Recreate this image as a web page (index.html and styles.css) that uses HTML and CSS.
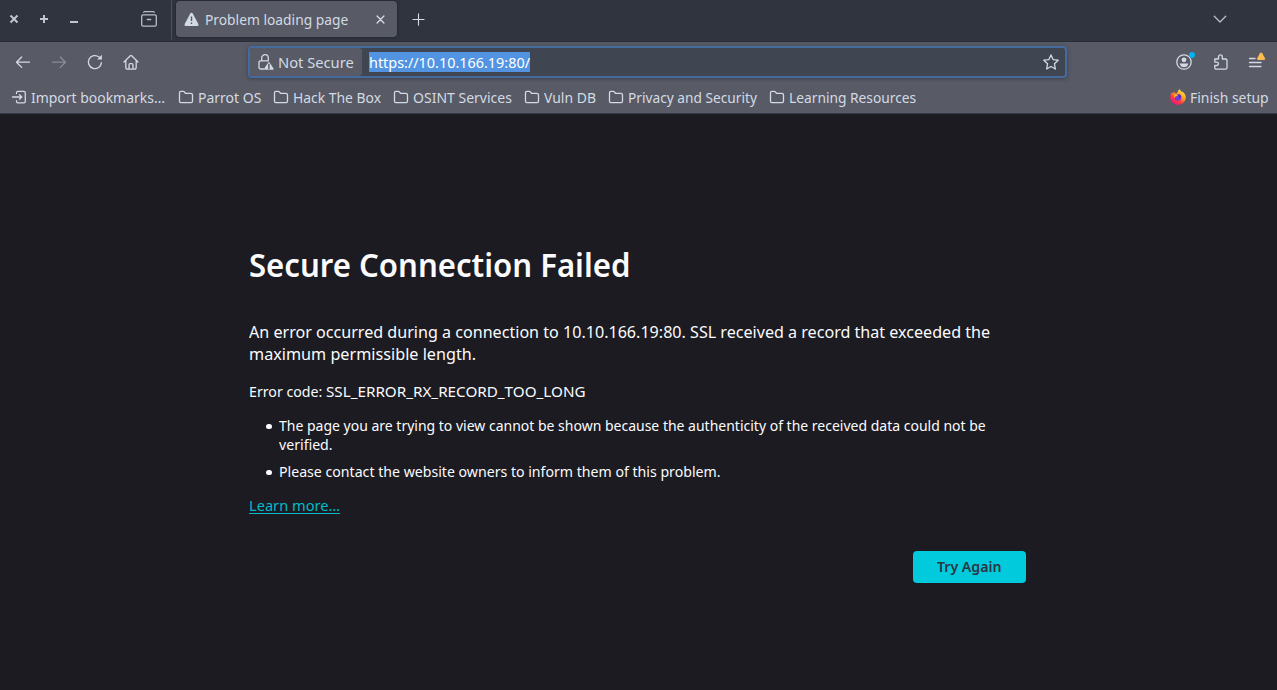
FILE: index.html
```html
<!DOCTYPE html>
<html lang="en">
<head>
<meta charset="utf-8">
<title>Problem loading page</title>
<link rel="stylesheet" href="styles.css">
</head>
<body>
<svg class="defs" width="0" height="0">
  <symbol id="folder" viewBox="0 0 16 16"><path d="M1.500 12.300V3.700q0-1.400 1.400-1.400h2.400q.6 0 1 .5l.9 1.200q.3.400.9.400h4.700q1.700 0 1.700 1.600v6.300q0 1.400-1.400 1.400H2.900q-1.400 0-1.400-1.400z"/></symbol>
</svg>
<header class="tabstrip">
  <div class="window-controls">
    <svg class="icon wc" viewBox="0 0 10 10"><path d="M1.500 1.500l7 7M8.500 1.500l-7 7"/></svg>
    <svg class="icon wc" viewBox="0 0 10 10"><path d="M5 1v8M1 5h8"/></svg>
    <svg class="icon wc" viewBox="0 0 10 10"><path d="M1 8h8"/></svg>
  </div>
  <svg class="icon view" viewBox="0 0 16 16"><path d="M2.700 1.200q.3-.6 1-.6h8.600q.7 0 1 .6M2 3.900h12q1.300 0 1.300 1.300v8.600q0 1.400-1.400 1.400H2.100Q.7 15.200.7 13.800V5.200q0-1.300 1.300-1.300zM6.300 8.500h3.400"/></svg>
  <div class="tab">
    <svg class="warn" viewBox="0 0 16 16"><path class="fill" d="M6.700 1.700q1.300-2 2.600 0l6 11q.9 2-1.200 2.300H1.900Q-.2 14.700.7 12.700z"/><path class="mark" d="M8 4.700v5M8 11.300v1.500"/></svg>
    <span class="tab-title fit">Problem loading page</span>
    <svg class="icon tab-close" viewBox="0 0 10 10"><path d="M1.200 1.200l7.600 7.600M8.800 1.200L1.200 8.800"/></svg>
  </div>
  <svg class="icon plus" viewBox="0 0 14 14"><path d="M7 1v12M1 7h12"/></svg>
  <svg class="icon chevron" viewBox="0 0 14 14"><path d="M1.300 4.300L7 10l5.700-5.700"/></svg>
</header>
<nav class="toolbar">
  <div class="nav-icons">
    <svg class="icon" viewBox="0 0 16 16"><path d="M14.500 8.200H1.500M6.700 3L1.500 8.200l5.200 5.200"/></svg>
    <svg class="icon dim" viewBox="0 0 16 16"><path d="M1.500 8.200h13M9.300 3l5.200 5.200-5.200 5.200"/></svg>
    <svg class="icon" viewBox="0 0 16 16"><path d="M14.400 8.600A6.500 6.500 0 1 1 12 3l1.500 1.300"/><path class="fill" d="M14.900.8v4.700h-4.700z"/></svg>
    <svg class="icon home" viewBox="0 0 16 16"><path d="M1 8l6.300-6.300q.7-.6 1.400 0L15 8M2.800 6.600v6.700q0 1.900 1.900 1.900h6.600q1.900 0 1.900-1.900V6.600M6 15v-4q0-1.300 1.300-1.300h1.400Q10 9.700 10 11v4"/></svg>
  </div>
  <div class="urlbar">
    <div class="identity">
      <svg class="icon" viewBox="0 0 16 16"><path d="M3.700 6.500V4a3.300 3.300 0 0 1 6.600 0v2.500M6 15H2.700q-1.700 0-1.700-1.700V8.500q0-1.700 1.700-1.700h7.600"/><path class="fill" d="M10.100 8.700q.8-1.200 1.600 0l3.700 5.500q.7 1.500-.7 1.600H7.100q-1.400-.1-.7-1.600z"/><path class="mark" d="M10.900 10.300v2.600M10.900 13.800v1"/></svg>
      <span class="fit">Not Secure</span>
    </div>
    <span class="url"><span class="fit">https://10.10.166.19:80/</span></span>
    <svg class="icon star" viewBox="0 0 16 16"><path d="M8 .9l2.100 4.700 5.100.6-3.800 3.500 1 5.300L8 12.500 3.600 15l1-5.300L.8 6.200l5.100-.6z"/></svg>
  </div>
  <div class="tools">
    <svg class="icon account" viewBox="0 0 18 18"><circle cx="8" cy="10" r="7.200"/><circle class="fill" cx="8" cy="7.800" r="2.400"/><path class="fill" d="M3.700 11.400h8.600q-.7 3.700-4.300 3.700t-4.300-3.700z"/><circle class="dot" cx="16" cy="3" r="3"/></svg>
    <svg class="icon" viewBox="0 0 16 16"><path d="M1.800 5h3.700V2.800a1.900 1.900 0 0 1 3.800 0V5h3.200q1.500 0 1.500 1.500v7.200q0 1.500-1.500 1.500H3.300q-1.500 0-1.500-1.500v-2.200h2a1.700 1.700 0 0 0 0-3.400h-2z"/></svg>
    <svg class="icon menu" viewBox="0 0 18 18"><path d="M1.500 6.500H7M1.500 10.500H13M1.500 14.500H13"/><path class="alert" d="M12 1.200q1.100-1.600 2.200 0l2.800 5q.5 1.600-1 1.800h-5.800q-1.500-.2-1-1.800z"/></svg>
  </div>
</nav>
<nav class="bookmarks">
  <a class="bm import"><svg class="icon" viewBox="0 0 16 16"><path d="M5.500 4.500V3.700q0-1.400 1.400-1.400h6q1.400 0 1.400 1.400v8.700q0 1.400-1.400 1.400h-6q-1.400 0-1.400-1.400v-.8M1.500 8h9M8.500 5.700L10.800 8l-2.300 2.300"/></svg><span class="fit">Import bookmarks…</span></a>
  <a class="bm parrot"><svg class="icon"><use href="#folder"/></svg><span class="fit">Parrot OS</span></a>
  <a class="bm htb"><svg class="icon"><use href="#folder"/></svg><span class="fit">Hack The Box</span></a>
  <a class="bm osint"><svg class="icon"><use href="#folder"/></svg><span class="fit">OSINT Services</span></a>
  <a class="bm vuln"><svg class="icon"><use href="#folder"/></svg><span class="fit">Vuln DB</span></a>
  <a class="bm privacy"><svg class="icon"><use href="#folder"/></svg><span class="fit">Privacy and Security</span></a>
  <a class="bm learning"><svg class="icon"><use href="#folder"/></svg><span class="fit">Learning Resources</span></a>
  <a class="bm setup"><svg class="firefox" viewBox="0 0 16 16">
    <defs><linearGradient id="flame" x1=".85" y1=".05" x2=".2" y2=".95"><stop offset="0" stop-color="#fff44f"/><stop offset=".4" stop-color="#ff9a1f"/><stop offset=".7" stop-color="#ff3647"/><stop offset="1" stop-color="#e31587"/></linearGradient></defs>
    <path fill="url(#flame)" d="M9.800 0q.3 1.800 1.800 2.800l.6-.4q3.600 2.300 3.600 6.200A7.800 7.400 0 0 1 .2 8.600Q.1 5 2 3l.5 1.500L4.200 2.500l.7 1.700 2 .2Q7.700 1.500 9.800 0z"/>
    <circle cx="8" cy="8.500" r="3.300" fill="#7139d8"/><path fill="#ffb02b" d="M3.800 6.300q2-1.700 4.500-.4l-1.600 1.400q-1.900.2-2.300 2z"/><path fill="#4b2ca5" d="M8 5.300q2.300-.2 3.300 2.300L9.500 9z"/></svg><span class="fit">Finish setup</span></a>
</nav>
<main class="page">
  <h1><span class="fit">Secure Connection Failed</span></h1>
  <p class="lead"><span class="fit">An error occurred during a connection to 10.10.166.19:80. SSL received a record that exceeded the</span><br><span class="fit l2">maximum permissible length.</span></p>
  <p class="code"><span class="fit label">Error code:</span><span class="fit value">SSL_ERROR_RX_RECORD_TOO_LONG</span></p>
  <ul>
    <li><span class="fit i1">The page you are trying to view cannot be shown because the authenticity of the received data could not be</span><br><span class="fit i2">verified.</span></li>
    <li><span class="fit i2">Please contact the website owners to inform them of this problem.</span></li>
  </ul>
  <a class="learn"><span class="fit">Learn more…</span></a>
  <button class="retry"><span class="fit">Try Again</span></button>
</main>
</body>
</html>
```
FILE: styles.css
```css
* { box-sizing: border-box; }
body { margin: 0; height: 690px; overflow: hidden; display: flex; flex-direction: column; background: #1c1b22; color: #fbfbfe; font: 15px/20px "Noto Sans", sans-serif; white-space: nowrap; }
.defs { display: none; }
svg { flex: none; overflow: visible; }
/* Condensed text: each label sets its own horizontal scale */
.fit { display: inline-block; transform: scaleX(var(--sx, 1)); transform-origin: 0 50%; }
.icon { width: 16px; height: 16px; fill: none; stroke: #d3dae3; stroke-width: 1.3; stroke-linecap: round; stroke-linejoin: round; }
.icon .fill { fill: #d3dae3; stroke: none; }
.mark, .icon .mark { stroke: #585a66; stroke-width: 1.5; fill: none; }
.tabstrip { height: 42px; display: flex; align-items: center; background: #2f343f; border-bottom: 1px solid #292d37; color: #d3dae3; padding-bottom: 3px; }
.window-controls { display: flex; gap: 20px; padding-left: 9px; width: 141px; }
.icon.wc { width: 10px; height: 10px; stroke: #c0c6d0; stroke-width: 2; stroke-linecap: butt; }
.icon.view { stroke: #b8bec9; }
.tab { width: 221px; height: 36px; margin-left: 19px; background: #585a66; border-radius: 4px; display: flex; align-items: center; padding: 0 12px 0 8px; box-shadow: 0 0 3px #1b1e25; position: relative; }
.tab::before { content: ""; position: absolute; left: -5px; top: -3px; height: 42px; border-left: 1px solid #4a4f5b; }
.warn { width: 15px; height: 15px; }
.warn .fill { fill: #d3dae3; }
.tab-title { margin-left: 6px; width: 155px; --sx: .92; }
.tab-close { width: 9px; height: 9px; margin-left: auto; stroke-width: 1.5; }
.plus { width: 13px; height: 13px; margin-left: 15px; stroke-width: 1.2; }
.chevron { width: 14px; height: 14px; margin-left: auto; margin-right: 50px; stroke: #b8bec9; }
.toolbar { height: 40px; display: flex; align-items: center; background: #585a66; color: #d3dae3; }
.nav-icons { display: flex; gap: 20px; padding-left: 15px; width: 248px; }
.home { margin-left: -.5px; }
.dim { opacity: .4; }
.urlbar { width: 819px; height: 32px; border: 2px solid #456a9c; border-radius: 4px; background: #404552; display: flex; align-items: center; padding-right: 6px; box-shadow: 0 1px 4px #3d414d; }
.identity { width: 112px; height: 28px; background: #585a66; border-radius: 3px; display: flex; align-items: center; padding-left: 7.5px; gap: 4.5px; --sx: .98; }
.url { width: 161px; margin-left: 7px; background: #5294e2; color: #fff; height: 20px; --sx: .96; }
.star { margin-left: auto; }
.tools { display: flex; gap: 19px; margin-left: auto; padding-right: 11px; align-items: center; }
.account, .menu { width: 18px; height: 18px; margin-top: -3px; }
.account .dot { fill: #00b3f4; stroke: none; }
.menu .alert { fill: #ffbd4f; stroke: none; }
.bookmarks { height: 32px; display: flex; align-items: center; background: #585a66; border-bottom: 1px solid #373b47; color: #d3dae3; padding: 0 9px 1px 11px; gap: 13px; }
.bm { display: flex; align-items: center; gap: 4px; }
.bm .fit { width: var(--w); }
.import { --w: 134px; --sx: .93; }
.parrot { --w: 62.3px; --sx: .932; }
.htb { --w: 87px; --sx: .926; }
.osint { --w: 98px; --sx: .934; }
.vuln { --w: 51px; --sx: .93; }
.privacy { --w: 128px; --sx: .914; }
.learning { --w: 127px; --sx: .918; }
.setup { --w: 78.5px; --sx: .928; margin-left: auto; }
.firefox { width: 16px; height: 16px; }
.page { width: 777px; margin-left: 249px; padding-top: 131px; display: flex; flex-direction: column; }
h1 { margin: 0; font-size: 33px; line-height: 40px; font-weight: 600; --sx: .943; }
.lead { margin: 36px 0 0 .4px; font-size: 17px; line-height: 22px; --sx: .947; }
.l2 { --sx: .952; }
.code { margin: 16px 0 0 .4px; display: flex; }
.label { width: 76.6px; --sx: .945; }
.value { --sx: 1.015; }
ul { margin: 15px 0 0; padding: 0; list-style: none; line-height: 19px; }
li { padding-left: 30.4px; position: relative; }
li::before { content: ""; position: absolute; left: 17px; top: 7.5px; width: 5.5px; height: 5.5px; border-radius: 50%; background: #fbfbfe; }
li + li { margin-top: 8px; }
.i1 { --sx: .933; }
.i2 { --sx: .942; }
.learn { align-self: flex-start; width: 91px; height: 19px; margin-top: 14px; color: #00bccb; border-bottom: 1px solid #00bccb; --sx: .975; }
.retry { align-self: flex-end; width: 113px; height: 32px; margin-top: 37px; border: 0; border-radius: 4px; background: #00cadb; color: #2b3443; font: 600 15px/20px "Noto Sans", sans-serif; padding: 0 0 2px; --sx: .942; }
.retry .fit { transform-origin: 50% 50%; }
```
